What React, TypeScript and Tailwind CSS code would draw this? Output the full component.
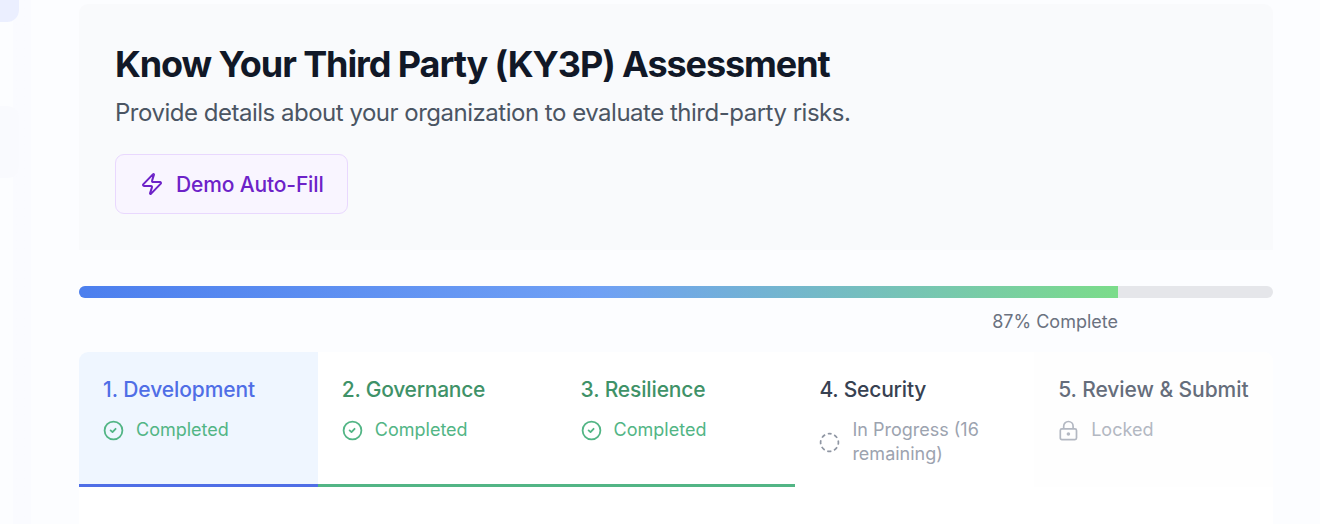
import { ReactNode } from "react";
import { Zap } from "lucide-react";

function CheckIcon() {
  return (
    <svg width="21" height="21" viewBox="0 0 21 21" fill="none" stroke="currentColor" strokeWidth="1.8" strokeLinecap="round" strokeLinejoin="round" className="shrink-0">
      <circle cx="10.5" cy="10.5" r="8.9" />
      <path d="M7.6 10.4l1.9 1.7 3.1-3.3" />
    </svg>
  );
}

function DashedCircleIcon() {
  return (
    <svg width="21" height="21" viewBox="0 0 21 21" fill="none" stroke="currentColor" strokeWidth="1.7" className="shrink-0 text-[#8f96a3]">
      <circle cx="10.5" cy="10.5" r="8.9" strokeDasharray="4.2 2.79" strokeDashoffset="2.1" transform="rotate(-90 10.5 10.5)" />
    </svg>
  );
}

function LockIcon() {
  return (
    <svg width="21" height="21" viewBox="0 0 21 21" fill="none" stroke="currentColor" strokeWidth="1.7" className="shrink-0">
      <rect x="2.3" y="8.8" width="16.2" height="10.8" rx="1.6" />
      <path d="M5.7 8.8V6.2a4.7 4.7 0 0 1 9.4 0v2.6" />
      <circle cx="10.4" cy="14" r="1.8" fill="currentColor" stroke="none" />
    </svg>
  );
}

type Step = { title: string; status: string; icon: ReactNode; box: string; titleStyle: string; statusColor: string };

const steps: Step[] = [
  { title: "1. Development", status: "Completed", icon: <CheckIcon />, box: "rounded-tl-[9px] bg-[#eff6ff] border-[#4f6ee6]", titleStyle: "text-[#4f6ee6] tracking-[-0.08px]", statusColor: "text-[#52b585]" },
  { title: "2. Governance", status: "Completed", icon: <CheckIcon />, box: "border-[#52b585]", titleStyle: "text-[#3f9268] tracking-[-0.26px]", statusColor: "text-[#52b585]" },
  { title: "3. Resilience", status: "Completed", icon: <CheckIcon />, box: "border-[#52b585]", titleStyle: "text-[#3f9268] tracking-[-0.14px]", statusColor: "text-[#52b585]" },
  { title: "4. Security", status: "In Progress (16 remaining)", icon: <DashedCircleIcon />, box: "border-transparent", titleStyle: "text-[#374151] tracking-[-0.18px]", statusColor: "text-[#9ca3af]" },
  { title: "5. Review & Submit", status: "Locked", icon: <LockIcon />, box: "rounded-tr-[9px] bg-[#fefefe] border-transparent", titleStyle: "text-[#656d7b] tracking-[-0.06px]", statusColor: "text-[#b3b8c2]" },
];

export default function App() {
  return (
    <div className="flex h-[524px] w-[1320px] overflow-hidden bg-[#fcfdff] font-['Inter',sans-serif]">
      <aside className="flex w-[31px] shrink-0 flex-col bg-linear-to-r from-[#fcfdff] from-[13px] to-[#fafbff] to-[13px]">
        <div className="h-[22px] w-[19px] rounded-br-[12px] bg-[#ebefff]" />
        <div className="mt-[84px] h-[72px] w-[19px] rounded-r-[12px] bg-[#f9fafe]" />
      </aside>
      <main className="ml-12 flex w-[1194px] shrink-0 flex-col pt-1">
        <header className="h-[246px] shrink-0 rounded-t-[9px] bg-[#f9fafc] px-9 pt-[35px]">
          <h1 className="h-[50px] text-[36px] leading-[50px] font-bold tracking-[-1.09px] whitespace-nowrap text-[#111827]">
            Know Your Third Party (KY3P) Assessment
          </h1>
          <p className="mt-1.5 h-9 text-[24px] leading-9 tracking-[-0.49px] whitespace-nowrap text-[#4b5563]">
            Provide details about your organization to evaluate third-party risks.
          </p>
          <button className="mt-[23px] flex h-[60px] w-[233px] items-center gap-3 rounded-[9px] border border-[#e9d8fe] bg-[#f9f5ff] pl-6 text-[21px] font-medium tracking-[-0.14px] whitespace-nowrap text-[#6d22c8]">
            <Zap size={24} strokeWidth={2} />
            <span className="pt-0.5">Demo Auto-Fill</span>
          </button>
        </header>
        <section className="mt-9 shrink-0">
          <div className="h-3 overflow-hidden rounded-full bg-[#e5e6ea]">
            <div className="h-full w-[1039px] bg-linear-to-r/srgb from-[#4c7fee] via-[#6fa0f5] to-[#7bdc8a]" />
          </div>
          <div className="mt-[10px] w-[1039px] text-right text-[18px] leading-[27px] text-[#6b7280]">87% Complete</div>
        </section>
        <section className="mt-[17px] h-[172px] shrink-0 rounded-t-[9px] bg-white">
          <div className="grid h-[135px] grid-cols-5">
            {steps.map((s) => (
              <div key={s.title} className={`border-b-[3px] px-6 pt-[22px] ${s.box}`}>
                <div className={`text-[21px] leading-[32px] font-medium whitespace-nowrap ${s.titleStyle}`}>{s.title}</div>
                <div className={`mt-3 flex items-center gap-3 text-[18px] leading-6 ${s.statusColor}`}>
                  {s.icon}
                  <span>{s.status}</span>
                </div>
              </div>
            ))}
          </div>
        </section>
      </main>
    </div>
  );
}
